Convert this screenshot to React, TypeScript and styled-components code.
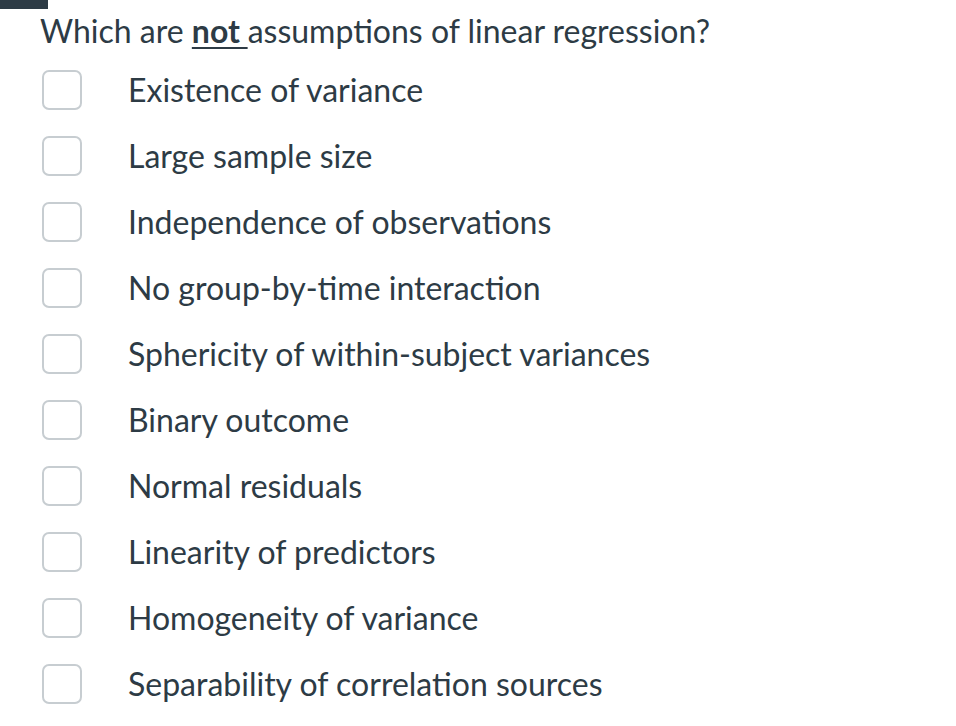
import React from "react";
import styled, { createGlobalStyle } from "styled-components";

const Global = createGlobalStyle`
  html, body { margin: 0; padding: 0; background: #ffffff; }
  body { font-family: Lato, "Noto Sans", sans-serif; color: #2d3b45; }
`;

const Page = styled.div`
  width: 956px;
  height: 726px;
  overflow: hidden;
`;

const TopTab = styled.div`
  width: 48px;
  height: 9px;
  background: #2d3b45;
`;

const Question = styled.div`
  padding: 2px 0 6px 40px;
  height: 48px;
  box-sizing: border-box;
  font-size: 32px;
  line-height: 40px;
  white-space: pre;
`;

const Emph = styled.span`
  font-weight: 700;
  text-decoration: underline;
  text-decoration-thickness: 2px;
  text-underline-offset: 4px;
`;

const List = styled.div`
  display: flex;
  flex-direction: column;
  padding-left: 42px;
`;

const Row = styled.label`
  display: flex;
  align-items: center;
  height: 66px;
`;

const Box = styled.span`
  width: 40px;
  height: 40px;
  box-sizing: border-box;
  border: 2px solid #c7cdd1;
  border-radius: 7px;
  background: #ffffff;
  flex: none;
`;

const Label = styled.span`
  margin-left: 46px;
  padding-bottom: 1px;
  font-size: 32px;
  line-height: 40px;
`;

const options = [
  "Existence of variance",
  "Large sample size",
  "Independence of observations",
  "No group-by-time interaction",
  "Sphericity of within-subject variances",
  "Binary outcome",
  "Normal residuals",
  "Linearity of predictors",
  "Homogeneity of variance",
  "Separability of correlation sources",
];

export default function App() {
  return (
    <Page>
      <Global />
      <TopTab />
      <Question>
        Which are <Emph>not </Emph>assumptions of linear regression?
      </Question>
      <List>
        {options.map((o) => (
          <Row key={o}>
            <Box />
            <Label>{o}</Label>
          </Row>
        ))}
      </List>
    </Page>
  );
}
